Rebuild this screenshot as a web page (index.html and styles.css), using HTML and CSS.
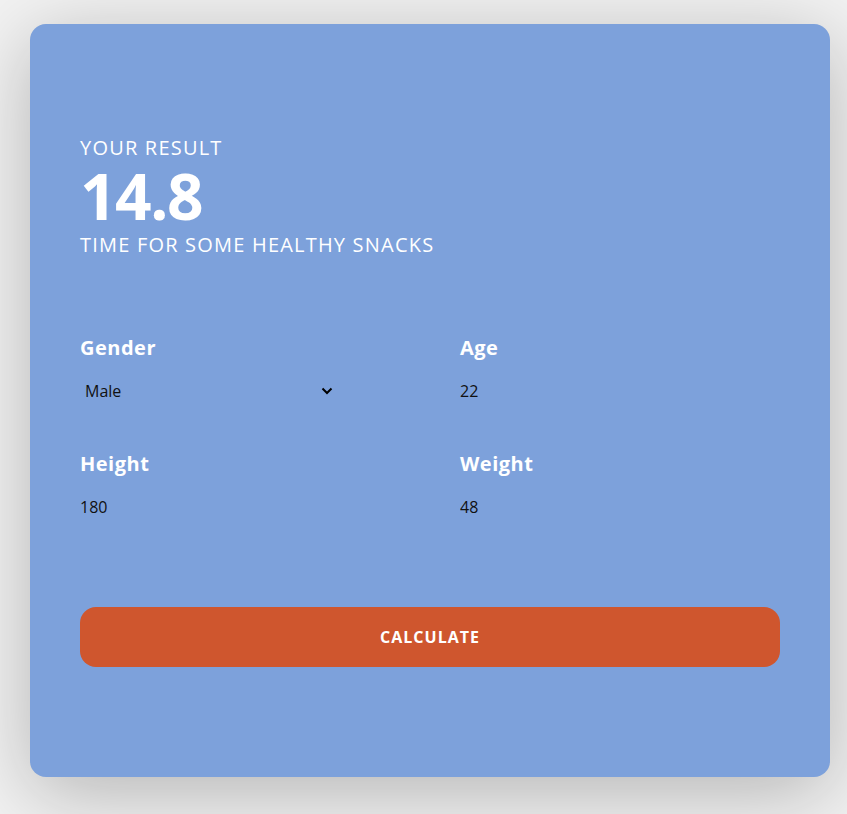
FILE: index.html
```html
<!DOCTYPE html>
<html lang="en">
<head>
<meta charset="utf-8">
<title>BMI Calculator</title>
<link rel="stylesheet" href="styles.css">
</head>
<body>
<main class="card">
  <section class="result">
    <p class="result-title">YOUR RESULT</p>
    <p class="result-value">14.8</p>
    <p class="result-text">TIME FOR SOME HEALTHY SNACKS</p>
  </section>
  <form class="form">
    <div class="field">
      <label class="label" for="gender">Gender</label>
      <div class="select-wrap">
        <select id="gender" class="select">
          <option>Male</option>
          <option>Female</option>
        </select>
        <svg class="chevron" width="12" height="8" viewBox="0 0 12 8"><path d="M1.5 1.5 L6 6 L10.5 1.5" fill="none" stroke="#000" stroke-width="2"/></svg>
      </div>
    </div>
    <div class="field">
      <label class="label" for="age">Age</label>
      <input id="age" class="input" type="text" value="22">
    </div>
    <div class="field">
      <label class="label" for="height">Height</label>
      <input id="height" class="input" type="text" value="180">
    </div>
    <div class="field">
      <label class="label" for="weight">Weight</label>
      <input id="weight" class="input" type="text" value="48">
    </div>
  </form>
  <button class="button" type="button">CALCULATE</button>
</main>
</body>
</html>
```
FILE: styles.css
```css
* { box-sizing: border-box; }
html, body { margin: 0; padding: 0; }
body {
  background: #f2f2f2;
  font-family: "Open Sans", "DejaVu Sans", sans-serif;
  padding: 24px 0 0 30px;
  min-height: 814px;
}
.card {
  width: 800px;
  height: 753px;
  background: #7da1db;
  border-radius: 16px;
  box-shadow: 0 16px 80px rgba(0,0,0,0.26);
  padding: 113px 50px 110px;
  display: flex;
  flex-direction: column;
}
.result-title,
.result-value,
.result-text {
  margin: 0;
  color: #fff;
}
.result-title {
  font-size: 20px;
  line-height: 22px;
  letter-spacing: 1.2px;
}
.result-value {
  margin-top: 2px;
  font-size: 64px;
  line-height: 70px;
  font-weight: 700;
  letter-spacing: -1.5px;
}
.result-text {
  margin-top: 3px;
  font-size: 20px;
  line-height: 22px;
  letter-spacing: 1.2px;
}
.form {
  margin-top: 81px;
  display: grid;
  grid-template-columns: 1fr 1fr;
  column-gap: 60px;
  row-gap: 51px;
}
.field {
  display: flex;
  flex-direction: column;
  gap: 21px;
}
.label {
  color: #fff;
  font-size: 20px;
  line-height: 22px;
  font-weight: 700;
  letter-spacing: 0.5px;
}
.input, .select {
  font-family: inherit;
  font-size: 16px;
  line-height: 22px;
  height: 22px;
  padding: 0;
  border: none;
  background: transparent;
  color: #111;
  outline: none;
}
.select-wrap {
  position: relative;
  width: 260px;
}
.select {
  appearance: none;
  -webkit-appearance: none;
  width: 100%;
  padding-left: 5px;
}
.chevron {
  position: absolute;
  left: 241px;
  top: 7px;
  pointer-events: none;
}
.button {
  margin-top: 89px;
  height: 60px;
  width: 100%;
  border: none;
  border-radius: 16px;
  background: #cf562e;
  color: #fff;
  font-family: inherit;
  font-size: 16px;
  font-weight: 700;
  letter-spacing: 1px;
}
```
